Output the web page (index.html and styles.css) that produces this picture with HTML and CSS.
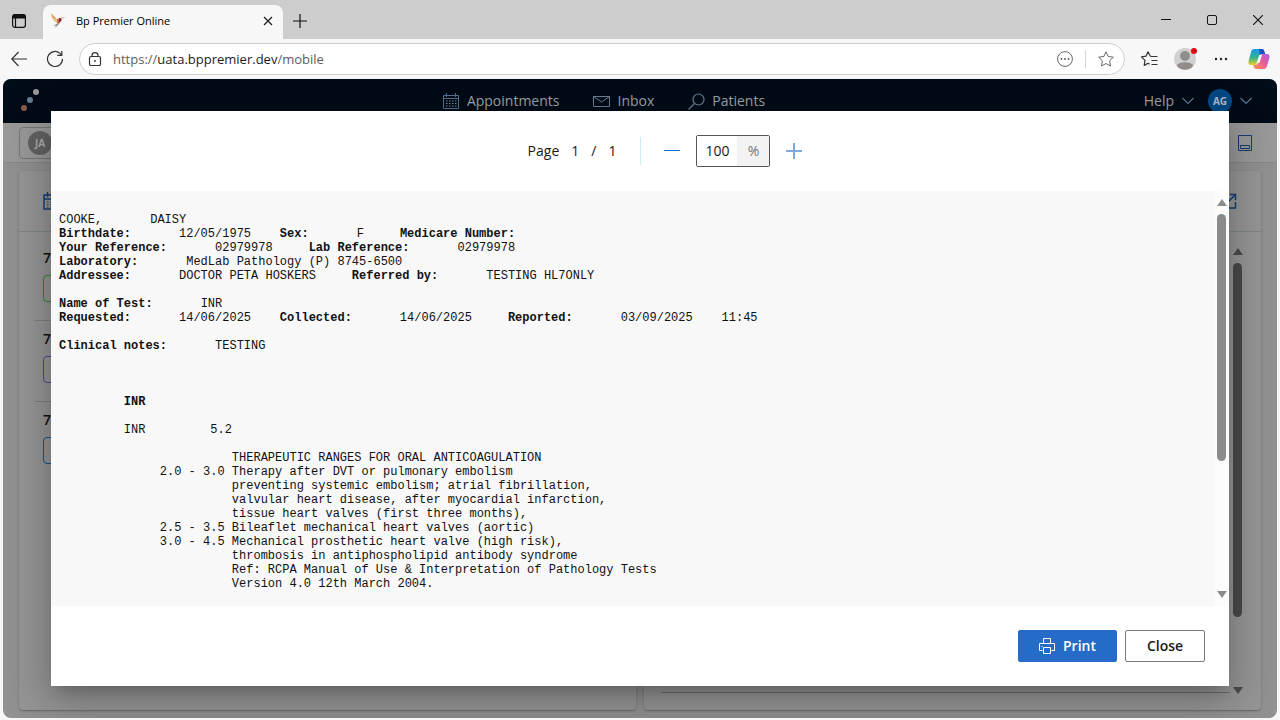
FILE: index.html
```html
<!DOCTYPE html>
<html lang="en">
<head>
<meta charset="utf-8">
<title>Bp Premier Online</title>
<link rel="stylesheet" href="styles.css">
</head>
<body>
<div class="browser">
  <div class="tabstrip">
    <button class="icon-btn tab-actions" aria-label="Tab actions">
      <svg width="16" height="16" viewBox="0 0 16 16"><rect x="1.600" y="1.600" width="12.800" height="12.800" rx="2.400" fill="none" stroke="#111" stroke-width="1.200"/><path d="M1.200 5.600V4a3 3 0 0 1 3-3h7.600a3 3 0 0 1 3 3v1.600z" fill="#111"/><path d="M4.500 5v9.500" stroke="#111" stroke-width="1.200"/></svg>
    </button>
    <div class="tab">
      <svg class="favicon" width="18" height="16" viewBox="0 0 18 16"><path d="M1 0l5 5 2 5-3-2-2-3-1-.5z" fill="#dfa45c"/><path d="M1 4l6 3 2 3-4-1z" fill="#efc78d"/><path d="M7 6l4-1 1 2-3 4-2-1z" fill="#c36a43"/><path d="M9 5h2v3l-2 1z" fill="#7c2657"/><path d="M10 5l6-1-5 2z" fill="#d5863d"/><path d="M8 10l-5 3 3-.5L5 15l4-4z" fill="#8d9096"/></svg>
      <span class="tab-title">Bp Premier Online</span>
      <button class="icon-btn" aria-label="Close tab"><svg width="10" height="10" viewBox="0 0 10 10"><path d="M1 1l8 8M9 1l-8 8" stroke="#222" stroke-width="1.300"/></svg></button>
    </div>
    <button class="icon-btn new-tab" aria-label="New tab"><svg width="14" height="14" viewBox="0 0 14 14"><path d="M7 0v14M0 7h14" stroke="#111" stroke-width="1.200"/></svg></button>
    <div class="window-controls">
      <button class="icon-btn" aria-label="Minimise"><svg width="10" height="12" viewBox="0 0 10 12"><path d="M0 5.500h10" stroke="#111"/></svg></button>
      <button class="icon-btn" aria-label="Maximise"><svg width="10" height="10" viewBox="0 0 10 10"><rect x=".5" y=".5" width="9" height="9" rx="1.500" fill="none" stroke="#111"/></svg></button>
      <button class="icon-btn" aria-label="Close window"><svg width="10" height="10" viewBox="0 0 10 10"><path d="M0 0l10 10M10 0L0 10" stroke="#111" stroke-width="1.100"/></svg></button>
    </div>
  </div>

  <div class="toolbar">
    <button class="icon-btn" aria-label="Back"><svg width="16" height="16" viewBox="0 0 16 16"><path d="M7.500 1L.8 8l6.700 7M.8 8H16" fill="none" stroke="#333" stroke-width="1.200"/></svg></button>
    <button class="icon-btn reload" aria-label="Reload"><svg width="18" height="18" viewBox="0 0 18 18"><path d="M16.500 9a7.500 7.500 0 1 1-2.500-5.600l1.800 1.700M15.800 1v4.300h-4.500" fill="none" stroke="#333" stroke-width="1.200"/></svg></button>
    <div class="address">
      <svg width="14" height="14" viewBox="0 0 14 14"><rect x="1.500" y="4.500" width="11" height="9" rx="1.500" fill="none" stroke="#333" stroke-width="1.200"/><path d="M4 4.500V3.300a3 2.700 0 0 1 6 0v1.200" fill="none" stroke="#333" stroke-width="1.200"/><circle cx="7" cy="9" r=".9" fill="#333"/></svg>
      <a class="url" href="#"><span class="dim">https://</span>uata.bppremier.dev<span class="dim">/mobile</span></a>
      <button class="icon-btn" aria-label="Site options"><svg width="16" height="16" viewBox="0 0 16 16"><circle cx="8" cy="8" r="7.400" fill="none" stroke="#666"/><circle cx="4.500" cy="8" r=".9" fill="#555"/><circle cx="8" cy="8" r=".9" fill="#555"/><circle cx="11.500" cy="8" r=".9" fill="#555"/></svg></button>
      <span class="address-divider"></span>
      <button class="icon-btn" aria-label="Favourite"><svg width="16" height="16" viewBox="0 0 16 16"><path d="M8 .8l2.200 4.700 5.100.7-3.700 3.600.9 5.200L8 12.500 3.500 15l.9-5.200L.7 6.200l5.100-.7z" fill="none" stroke="#666" stroke-linejoin="round"/></svg></button>
    </div>
    <div class="toolbar-end">
      <button class="icon-btn" aria-label="Favourites"><svg width="17" height="16" viewBox="0 0 17 16"><path d="M10.500 5.500L9.200 5 7 .8 5 5.200l-4.500.7L4 9.400 3.200 14.500 7 12.300l1.500.8" fill="none" stroke="#333" stroke-width="1.200" stroke-linejoin="round"/><path d="M10 5.500h6.500M10.500 9.500h6M10.500 13.500h6" stroke="#333" stroke-width="1.200"/></svg></button>
      <button class="icon-btn" aria-label="Profile"><svg width="26" height="26" viewBox="0 0 26 26"><circle cx="12" cy="13" r="11" fill="#d2d0ce"/><circle cx="12" cy="10" r="5" fill="#918d8b"/><path d="M4 20c0-5 16-5 16 0-4 5-12 5-16 0z" fill="#918d8b"/><circle cx="21" cy="5" r="3" fill="#e3000f"/></svg></button>
      <button class="icon-btn more" aria-label="Settings and more"><svg width="14" height="4" viewBox="0 0 14 4"><circle cx="2" cy="2" r="1.200" fill="#222"/><circle cx="7" cy="2" r="1.200" fill="#222"/><circle cx="12" cy="2" r="1.200" fill="#222"/></svg></button>
      <button class="icon-btn" aria-label="Copilot"><svg width="22" height="20" viewBox="0 0 22 20">
        <defs><linearGradient id="a" x1="0" y1="0" x2="0" y2="1"><stop offset="0" stop-color="#1598ef"/><stop offset=".55" stop-color="#35b58d"/><stop offset="1" stop-color="#f2cf23"/></linearGradient><linearGradient id="b" x1="1" y1="0" x2="0" y2="1"><stop offset="0" stop-color="#a65cf0"/><stop offset=".5" stop-color="#ee5c96"/><stop offset="1" stop-color="#fb9b45"/></linearGradient></defs>
        <path d="M6 0h8c1.500 0 2 1 2.500 3l.6 2H14c-2 0-2.700 1-3.200 3l-1.500 5c-.6 2-1.300 3-3.300 3H3c-2 0-3-1.500-2.400-4L3 3c.6-2 1.500-3 3-3z" fill="url(#a)"/><path d="M11 0h3c1.500 0 2 1 2.500 3l.6 2H14c-1 0-1.700.4-2.200 1z" fill="#1d4fc6"/>
        <path d="M16 20H8c-1.500 0-2-1-2.500-3l-.3-1H7c2 0 2.700-1 3.200-3l1.500-5c.6-2 1.300-3 3.300-3h4c2 0 3 1.500 2.400 4L19 17c-.6 2-1.500 3-3 3z" fill="url(#b)"/><path d="M11.500 6h2.500l-2.500 8H8.500z" fill="#f7f7f7"/></svg></button>
    </div>
  </div>

  <div class="app">
    <header class="app-header">
      <svg class="logo" width="20" height="24" viewBox="0 0 20 24"><circle cx="16" cy="5" r="3" fill="#999"/><circle cx="10" cy="13" r="3" fill="#627c8e"/><circle cx="4" cy="21" r="3" fill="#8f5a50"/></svg>
      <nav class="nav">
        <a href="#"><svg width="18" height="16" viewBox="0 0 18 16"><path d="M1.500 2.500h15v13h-15zM1.500 5.500h15M4.500 0v4M13.500 0v4" fill="none" stroke="#587391"/><path d="M4 8h11M4 10.500h11M4 13h11" stroke="#7b90a5" stroke-dasharray="1.500 1.500"/></svg>Appointments</a>
        <a href="#"><svg width="17" height="12" viewBox="0 0 17 12"><path d="M.5 1.500h16v10H.5zM.5 1.500l8 5.500 8-5.500" fill="none" stroke="#6a8197"/></svg>Inbox</a>
        <a href="#"><svg width="17" height="17" viewBox="0 0 17 17"><circle cx="10.500" cy="6.500" r="5.500" fill="none" stroke="#6a8197" stroke-width="1.200"/><path d="M6.500 10.500l-6 6" stroke="#6a8197" stroke-width="1.200"/></svg>Patients</a>
      </nav>
      <div class="account">
        <button class="help">Help <svg width="12" height="8" viewBox="0 0 12 8"><path d="M.5 1l5.500 5.500L11.500 1" fill="none" stroke="#5d7891" stroke-width="1.200"/></svg></button>
        <button class="help"><span class="avatar">AG</span><svg width="12" height="8" viewBox="0 0 12 8"><path d="M.5 1l5.500 5.500L11.500 1" fill="none" stroke="#5d7891" stroke-width="1.200"/></svg></button>
      </div>
    </header>
    <div class="subbar">
      <button class="user-select"><span class="avatar grey">JA</span></button>
      <button class="icon-btn" aria-label="Toggle panel"><svg width="14" height="16" viewBox="0 0 14 16"><path d="M.5.5h13v15H.5zM2.500 10.500h9v3h-9z" fill="none" stroke="#173d73"/></svg></button>
    </div>
    <main class="panels">
      <section class="card">
        <div class="card-head"><svg width="18" height="18" viewBox="0 0 18 18"><path d="M1 3h16v14H1zM1 7h16M4.500 0v5M13 0v5" fill="none" stroke="#173f75" stroke-width="1.500"/><path d="M4 10h11M4 12.500h11M4 15h11" stroke="#173f75" stroke-dasharray="1.500 1.500"/></svg></div>
        <ul class="slots">
          <li><b>7</b><span class="slot green"></span></li>
          <li><b>7</b><span class="slot violet"></span></li>
          <li><b>7</b><span class="slot blue"></span></li>
        </ul>
      </section>
      <section class="card">
        <div class="card-head end"><svg width="16" height="16" viewBox="0 0 16 16"><path d="M6 1.500H1V15h13.500V9M9 1.500h5.500V7M14.500 1.500L7 9" fill="none" stroke="#173f75" stroke-width="1.500"/></svg></div>
        <div class="card-body"><div class="list-end"></div>
          <div class="scroll outer"><i class="up"></i><div class="track"><i class="thumb"></i></div><i class="down"></i></div>
        </div>
      </section>
    </main>

    <div class="overlay">
      <div class="dialog" role="dialog" aria-label="Document preview">
        <div class="dialog-head">
          <div class="pager"><span>Page</span><span>1</span><span>/</span><span>1</span></div>
          <div class="zoom">
            <button class="icon-btn" aria-label="Zoom out"><svg width="16" height="16" viewBox="0 0 16 16"><path d="M0 7.500h16" stroke="#256bc8"/></svg></button>
            <label class="percent"><input value="100" aria-label="Zoom level"><span>%</span></label>
            <button class="icon-btn" aria-label="Zoom in"><svg width="16" height="16" viewBox="0 0 16 16"><path d="M8 0v16M0 8h16" stroke="#7fa8e0" stroke-width="2"/></svg></button>
          </div>
        </div>
        <div class="dialog-body">
<pre class="report">COOKE,<span class="v">DAISY</span>
<b>Birthdate:</b><span class="v">12/05/1975</span>    <b>Sex:</b><span class="v">F</span>     <b>Medicare Number:</b>
<b>Your Reference:</b><span class="v">02979978</span>     <b>Lab Reference:</b><span class="v">02979978</span>
<b>Laboratory:</b><span class="v">MedLab Pathology (P) 8745-6500</span>
<b>Addressee:</b><span class="v">DOCTOR PETA HOSKERS</span>     <b>Referred by:</b><span class="v">TESTING HL7ONLY</span>

<b>Name of Test:</b><span class="v">INR</span>
<b>Requested:</b><span class="v">14/06/2025</span>    <b>Collected:</b><span class="v">14/06/2025</span>     <b>Reported:</b><span class="v">03/09/2025</span>    11:45

<b>Clinical notes:</b><span class="v">TESTING</span>



         <b>INR</b>

         INR         5.2

                        THERAPEUTIC RANGES FOR ORAL ANTICOAGULATION
              2.0 - 3.0 Therapy after DVT or pulmonary embolism
                        preventing systemic embolism; atrial fibrillation,
                        valvular heart disease, after myocardial infarction,
                        tissue heart valves (first three months),
              2.5 - 3.5 Bileaflet mechanical heart valves (aortic)
              3.0 - 4.5 Mechanical prosthetic heart valve (high risk),
                        thrombosis in antiphospholipid antibody syndrome
                        Ref: RCPA Manual of Use &amp; Interpretation of Pathology Tests
                        Version 4.0 12th March 2004.</pre>
          <div class="scroll inner"><i class="up"></i><div class="track"><i class="thumb"></i></div><i class="down"></i></div>
        </div>
        <div class="dialog-foot">
          <button class="btn primary"><svg width="16" height="16" viewBox="0 0 16 16"><path d="M4.500 6V.5h7V6M3.500 12.500h-3v-7h15v7h-3M4.500 9.500h7v6h-7zM2.500 8.500h1" fill="none" stroke="#fff"/></svg>Print</button>
          <button class="btn">Close</button>
        </div>
      </div>
    </div>
  </div>
</div>
</body>
</html>
```
FILE: styles.css
```css
* { box-sizing: border-box; }
body { margin: 0; font-family: "Open Sans", "Noto Sans", sans-serif; font-size: 14px; line-height: 20px; color: #1a1a1a; }
button, input { font: inherit; color: inherit; }
button { cursor: pointer; }
svg { display: block; flex: none; }
a { color: inherit; text-decoration: none; }

.browser { height: 100vh; display: flex; flex-direction: column; background: #f7f7f7; overflow: hidden; }
.icon-btn { display: flex; align-items: center; justify-content: center; border: 0; padding: 0; background: none; }

.tabstrip { height: 39px; display: flex; align-items: center; background: #cdcdcd; }
.tab-actions { margin-left: 11px; margin-top: 3px; }
.tab { align-self: flex-end; height: 34px; width: 240px; margin-left: 16px; padding: 0 10px 2px 7px; display: flex; align-items: center; background: #f7f7f7; border-radius: 8px 8px 0 0; font-size: 11px; }
.tab-title { flex: 1; margin-left: 8px; color: #000; }
.new-tab { margin-left: 10px; margin-top: 2px; }
.window-controls { margin-left: auto; display: flex; gap: 36px; padding-right: 17px; }

.toolbar { height: 40px; display: flex; align-items: center; padding: 0 10px 0 11px; }
.reload { margin-left: 19px; }
.address { flex: 1; height: 32px; margin-left: 15px; padding: 0 10px 0 8px; display: flex; align-items: center; background: #fff; border: 1px solid #cfcfcf; border-radius: 16px; }
.url { flex: 1; margin-left: 11px; font-size: 13px; color: #1b1b1b; }
.dim { color: #5d5d5d; }
.address-divider { width: 1px; height: 18px; margin: 0 12px; background: #d5d5d5; }
.toolbar-end { display: flex; align-items: center; gap: 15px; padding-left: 16px; }
.more { margin-right: 5px; }

.app { flex: 1; min-height: 0; margin: 0 3px 2px; display: flex; flex-direction: column; position: relative; background: #919191; border-radius: 8px; overflow: hidden; }
.app-header { height: 44px; display: flex; align-items: center; justify-content: space-between; padding: 0 25px 0 17px; background: #000c18; color: #a0a5aa; position: relative; }
.logo { margin-bottom: 4px; }
.nav { position: absolute; inset: 0; display: flex; align-items: center; justify-content: center; gap: 34px; padding-right: 73px; }
.nav a { display: flex; align-items: center; gap: 7px; }
.account { display: flex; gap: 14px; position: relative; }
.help { display: flex; align-items: center; gap: 8px; border: 0; padding: 0; background: none; }
.avatar { width: 24px; height: 24px; display: flex; align-items: center; justify-content: center; border-radius: 50%; background: #004a86; color: #aebdca; font-size: 10px; font-weight: 700; }
.subbar { height: 40px; display: flex; align-items: center; justify-content: space-between; padding: 0 25px 0 16px; background: #999; border-bottom: 1px solid #868a8a; }
.user-select { height: 32px; width: 160px; padding: 0 8px; display: flex; align-items: center; border: 1px solid #74777c; border-radius: 4px; background: none; }
.grey { background: #626262; color: #aaa; }
.panels { flex: 1; min-height: 0; display: grid; grid-template-columns: 1fr 1fr; gap: 8px; padding: 8px 16px; }
.card { display: flex; flex-direction: column; background: #969696; border-radius: 4px; box-shadow: 0 1px 2px #666; }
.card-head { height: 61px; padding: 0 24px; display: flex; align-items: center; border-bottom: 1px solid #7e8788; }
.end { justify-content: flex-end; }
.slots { margin: 0; padding: 0 16px; list-style: none; }
.slots li { height: 81px; padding: 8px; border-bottom: 1px solid #7d8084; }
.slots li:first-child { height: 89px; padding-top: 16px; }
.slots li:last-child { border: 0; }
.slots b { display: block; font-weight: 600; color: #111; }
.slot { display: block; height: 27px; margin-top: 7px; border: 1px solid; border-radius: 4px; }
.green { border-color: #338338; }
.violet { border-color: #4b4a91; }
.blue { border-color: #165688; }
.card-body { flex: 1; display: flex; padding: 12px 16px 12px 17px; }
.list-end { flex: 1; margin-bottom: 5px; border-bottom: 1px solid #6b6e75; }

.scroll { display: flex; flex-direction: column; align-items: center; }
.scroll i { display: block; }
.up { border: 5px solid transparent; border-top: 0; border-bottom: 7px solid #8b8b8b; }
.down { border: 5px solid transparent; border-bottom: 0; border-top: 7px solid #8b8b8b; }
.track { flex: 1; width: 9px; margin: 8px 0; }
.thumb { width: 9px; border-radius: 5px; background: #8b8b8b; }
.outer { width: 15px; padding: 4px 0; }
.outer .up { border-bottom-color: #4a4a4a; }
.outer .down { border-top-color: #4a4a4a; }
.outer .thumb { height: 85%; background: #4a4a4a; }
.inner { width: 15px; padding: 8px 0; background: #fcfcfc; }
.inner .thumb { height: 67%; }

.overlay { position: absolute; inset: 0; padding: 32px 48px; display: flex; }
.dialog { flex: 1; min-width: 0; display: flex; flex-direction: column; background: #fff; box-shadow: 0 11px 15px -7px rgba(0,0,0,.2), 0 12px 38px 3px rgba(0,0,0,.14), 0 9px 46px 8px rgba(0,0,0,.12); }
.dialog-head { height: 80px; display: flex; align-items: center; justify-content: center; padding-left: 50px; }
.pager { display: flex; gap: 12px; padding-right: 24px; }
.zoom { display: flex; align-items: center; gap: 16px; padding-left: 24px; position: relative; }
.zoom::before { content: ""; position: absolute; left: 0; top: 2px; width: 1px; height: 28px; background: #cdeef2; }
.percent { display: flex; width: 74px; height: 32px; border: 1px solid #555; border-radius: 2px; overflow: hidden; }
.percent input { flex: 1; min-width: 0; padding: 0 0 0 8px; border: 0; background: #fff; }
.percent span { width: 32px; line-height: 30px; text-align: center; background: #f3f3f3; color: #757575; }
.dialog-body { flex: 1; min-height: 0; display: flex; background: #f8f8f8; overflow: hidden; }
.report { flex: 1; margin: 0; padding: 22px 8px 0; font-family: "Courier New", "Liberation Mono", monospace; font-size: 12px; line-height: 14px; color: #111; }
.v { margin-left: 48px; }
.dialog-foot { height: 80px; display: flex; align-items: center; justify-content: flex-end; gap: 8px; padding: 0 24px; }
.btn { height: 32px; min-width: 80px; padding: 0 20px; display: flex; align-items: center; justify-content: center; gap: 8px; border: 1px solid #7a7a7a; border-radius: 2px; background: #fff; font-weight: 600; }
.primary { background: #256bc8; border-color: #256bc8; color: #fff; }
```
